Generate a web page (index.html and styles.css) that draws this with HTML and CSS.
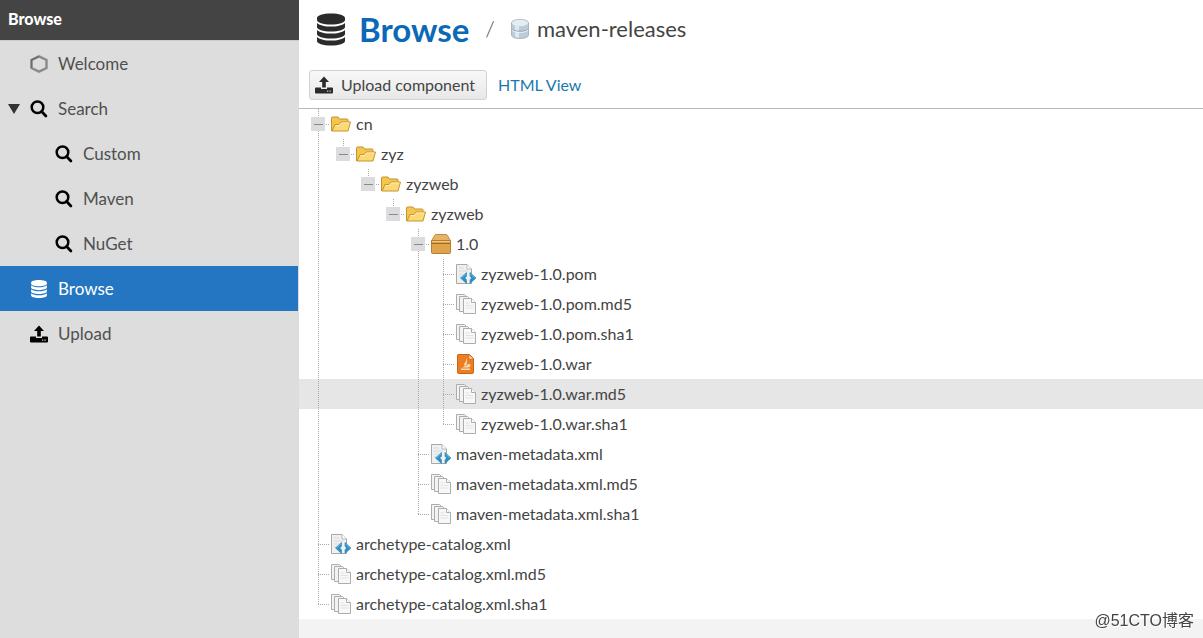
FILE: index.html
```html
<!DOCTYPE html>
<html lang="en">
<head>
	<meta charset="UTF-8">
	<title>Browse</title>
	<link rel="stylesheet" href="styles.css">
</head>
<body>
	<svg class="defs" aria-hidden="true">
		<symbol id="hexagon" viewBox="0 0 18 18">
			<path d="M9 1.300 16.500 5v8L9 16.700 1.500 13V5z" fill="none" stroke="#8a8a8a" stroke-width="2.4"/>
			<path d="M9 1.300 1.500 5v8" fill="none" stroke="#6c6c6c" stroke-width="1.400"/>
		</symbol>
		<symbol id="search" viewBox="0 0 18 18">
			<circle cx="7.5" cy="7.3" r="5.8" fill="none" stroke="currentColor" stroke-width="2.5"/>
			<path d="m11.6 11.6 4.3 4.3" stroke="currentColor" stroke-width="2.8" stroke-linecap="round"/>
		</symbol>
		<symbol id="database" viewBox="0 0 28 32">
			<path fill="currentColor" d="M0 4.500C0 2 6 0 14 0s14 2 14 4.500v2C28 9 22 11 14 11S0 9 0 6.500zM0 9.500c3 2.600 8.500 3.600 14 3.600s11-1 14-3.600v4C28 16 22 18 14 18S0 16 0 13.500zM0 16.500c3 2.600 8.500 3.600 14 3.600s11-1 14-3.600v4c0 2.500-6 4.500-14 4.500S0 23 0 20.500zM0 23.500c3 2.600 8.500 3.600 14 3.600s11-1 14-3.600v4c0 2.500-6 4.500-14 4.500S0 30 0 27.500z"/>
		</symbol>
		<symbol id="upload" viewBox="0 0 18 17">
			<path fill="currentColor" d="M9 0l5 5.500h-3.200V11H7.200V5.500H4zM1 11h5v1.500h6V11h5q1 0 1 1v4q0 1-1 1H1q-1 0-1-1v-4q0-1 1-1z"/>
			<path fill="#ccc" d="M12 14h1.300v1.200H12zM14.500 14h1.300v1.200h-1.300z"/>
		</symbol>
		<symbol id="repo" viewBox="0 0 18 20">
			<path d="M.500 4C.500 2 4 .500 9 .500S17.500 2 17.500 4v12c0 2-3.500 3.500-8.500 3.500S.500 18 .500 16z" fill="#bccbd8" stroke="#a9b7c3"/>
			<path d="M4 6v12l4 .8V7z" fill="#dfe8ef"/>
			<ellipse cx="9" cy="4" rx="8" ry="3.200" fill="#e4edf3"/>
			<path d="M.500 10c2 3 15 3 17 0" fill="none" stroke="#8fa2b3"/>
			<path d="M1 11.200c3 3 13 3 16 0" fill="none" stroke="#edf3f7"/>
		</symbol>
		<symbol id="folder" viewBox="0 0 20 16">
			<path d="M.500 15V2q0-1 1-1H7l1.500 2H16q1 0 1 1v3" fill="#f5c64d" stroke="#c8922f"/>
			<path d="M1 15 4 8.500h4L10 6h9.500L17 15z" fill="#fbd975" stroke="#c8922f" stroke-linejoin="round"/>
			<path d="M4.700 9.500h3.800l2-2.500h7.700" fill="none" stroke="#ffefb5"/>
		</symbol>
		<symbol id="package" viewBox="0 0 20 20">
			<path d="M.500 7 3.500 1.500Q4 .500 5 .500h10q1 0 1.500 1L19.500 7z" fill="#e5b365" stroke="#c38b3c"/>
			<path d="M.500 6.500h19v12q0 1-1 1h-17q-1 0-1-1z" fill="#dda44d" stroke="#b97d2e"/>
			<path d="M1 9.500h18" stroke="#9c6926"/>
			<path d="M1 7.500h18" stroke="#efc57d"/>
		</symbol>
		<symbol id="code" viewBox="0 0 20 20">
			<path d="M.500.500H11L15.500 5v14.500H.500z" fill="#eef0f1" stroke="#a8a8a8"/>
			<path d="M11 .500V5h4.500" fill="#fff" stroke="#b8b8b8"/>
			<path d="M3 4h5M3 7h9M3 10h4M3 13h2" stroke="#d7d9db"/>
			<path d="m10.500 8.500v3.700L8.800 14l1.700 1.800v3.700L4.500 14zM14 8.500v3.700l1.700 1.800-1.700 1.800v3.700l6-5.500z" fill="#2b91c5" stroke="#2b85b5" stroke-width=".6" stroke-linejoin="round"/>
			<path d="m9.800 10-4 4M14.700 10l4 4" stroke="#74c0e2" stroke-width=".8"/>
		</symbol>
		<symbol id="files" viewBox="0 0 20 20">
			<g fill="#f3f3f3" stroke="#adadad">
				<path d="M.500.500h8l3 3v12H.500z"/>
				<path d="M3.500 2.500h8l3 3v12h-11z"/>
				<path d="M7.500 4.500h8l4 4v11h-12z" fill="#f8f8f8"/>
				<path d="M15.500 4.500v4h4" fill="#fff"/>
			</g>
			<path d="M9.500 9h4M9.500 11.500h8M9.500 14h8" stroke="#e2e2e2"/>
		</symbol>
		<symbol id="archive" viewBox="0 0 20 20">
			<path d="M2 .500h11.500l4 4V18q0 1.500-1.500 1.500H3Q1.500 19.500 1.500 18V1z" fill="#ec7d22" stroke="#ca6415"/>
			<path d="M13 1v4h4" fill="#ffe2c4" stroke="#d66c18" stroke-width=".6"/>
			<path d="M5 16h9v-1.500H5zM6 13.500h6.500q2 0 2-2T12.500 10M9 12c-3-3 3-4 1-8 3 3-.500 5 1 8z" fill="#ffd9ae"/>
		</symbol>
	</svg>

	<nav class="sidebar">
		<h2>Browse</h2>
		<ul class="menu">
			<li><a href="#"><svg class="icon hexagon"><use href="#hexagon"/></svg>Welcome</a></li>
			<li><a href="#" class="parent"><i class="arrow"></i><svg class="icon"><use href="#search"/></svg>Search</a></li>
			<li><a href="#" class="child"><svg class="icon"><use href="#search"/></svg>Custom</a></li>
			<li><a href="#" class="child"><svg class="icon"><use href="#search"/></svg>Maven</a></li>
			<li><a href="#" class="child"><svg class="icon"><use href="#search"/></svg>NuGet</a></li>
			<li><a href="#" class="active"><svg class="icon"><use href="#database"/></svg>Browse</a></li>
			<li><a href="#"><svg class="icon"><use href="#upload"/></svg>Upload</a></li>
		</ul>
	</nav>

	<main class="main">
		<header class="header">
			<div class="crumbs">
				<svg class="big-icon"><use href="#database"/></svg>
				<h1><a href="#">Browse</a></h1>
				<span class="slash">/</span>
				<svg class="repo-icon"><use href="#repo"/></svg>
				<span class="repo-name">maven-releases</span>
			</div>
			<div class="toolbar">
				<button type="button" class="upload"><svg class="icon"><use href="#upload"/></svg>Upload component</button>
				<a href="#">HTML View</a>
			</div>
		</header>

		<ul class="tree">
			<li><i class="cell line elbow"><button type="button" class="toggle" aria-label="Collapse"></button></i><svg class="node folder"><use href="#folder"/></svg>cn</li>
			<li><i class="cell line"></i><i class="cell elbow last"><button type="button" class="toggle" aria-label="Collapse"></button></i><svg class="node folder"><use href="#folder"/></svg>zyz</li>
			<li><i class="cell line"></i><i class="cell"></i><i class="cell elbow last"><button type="button" class="toggle" aria-label="Collapse"></button></i><svg class="node folder"><use href="#folder"/></svg>zyzweb</li>
			<li><i class="cell line"></i><i class="cell"></i><i class="cell"></i><i class="cell elbow last"><button type="button" class="toggle" aria-label="Collapse"></button></i><svg class="node folder"><use href="#folder"/></svg>zyzweb</li>
			<li><i class="cell line"></i><i class="cell"></i><i class="cell"></i><i class="cell"></i><i class="cell line elbow"><button type="button" class="toggle" aria-label="Collapse"></button></i><svg class="node"><use href="#package"/></svg>1.0</li>
			<li><i class="cell line"></i><i class="cell"></i><i class="cell"></i><i class="cell"></i><i class="cell line"></i><i class="cell line elbow"></i><svg class="node"><use href="#code"/></svg>zyzweb-1.0.pom</li>
			<li><i class="cell line"></i><i class="cell"></i><i class="cell"></i><i class="cell"></i><i class="cell line"></i><i class="cell line elbow"></i><svg class="node"><use href="#files"/></svg>zyzweb-1.0.pom.md5</li>
			<li><i class="cell line"></i><i class="cell"></i><i class="cell"></i><i class="cell"></i><i class="cell line"></i><i class="cell line elbow"></i><svg class="node"><use href="#files"/></svg>zyzweb-1.0.pom.sha1</li>
			<li><i class="cell line"></i><i class="cell"></i><i class="cell"></i><i class="cell"></i><i class="cell line"></i><i class="cell line elbow"></i><svg class="node"><use href="#archive"/></svg>zyzweb-1.0.war</li>
			<li class="hover"><i class="cell line"></i><i class="cell"></i><i class="cell"></i><i class="cell"></i><i class="cell line"></i><i class="cell line elbow"></i><svg class="node"><use href="#files"/></svg>zyzweb-1.0.war.md5</li>
			<li><i class="cell line"></i><i class="cell"></i><i class="cell"></i><i class="cell"></i><i class="cell line"></i><i class="cell elbow last"></i><svg class="node"><use href="#files"/></svg>zyzweb-1.0.war.sha1</li>
			<li><i class="cell line"></i><i class="cell"></i><i class="cell"></i><i class="cell"></i><i class="cell line elbow"></i><svg class="node"><use href="#code"/></svg>maven-metadata.xml</li>
			<li><i class="cell line"></i><i class="cell"></i><i class="cell"></i><i class="cell"></i><i class="cell line elbow"></i><svg class="node"><use href="#files"/></svg>maven-metadata.xml.md5</li>
			<li><i class="cell line"></i><i class="cell"></i><i class="cell"></i><i class="cell"></i><i class="cell elbow last"></i><svg class="node"><use href="#files"/></svg>maven-metadata.xml.sha1</li>
			<li><i class="cell line elbow"></i><svg class="node"><use href="#code"/></svg>archetype-catalog.xml</li>
			<li><i class="cell line elbow"></i><svg class="node"><use href="#files"/></svg>archetype-catalog.xml.md5</li>
			<li><i class="cell elbow last"></i><svg class="node"><use href="#files"/></svg>archetype-catalog.xml.sha1</li>
		</ul>
	</main>
	<div class="watermark">@51CTO博客</div>
</body>
</html>
```
FILE: styles.css
```css
*{
	margin: 0;
	padding: 0;
	box-sizing: border-box;
}
body{
	display: flex;
	min-height: 100vh;
	background: #f3f3f3;
	color: #444;
	font: 16px/30px Lato, "Noto Sans CJK SC", sans-serif;
}
ul{
	list-style: none;
}
a{
	color: #1c78b0;
	text-decoration: none;
}
svg{
	flex: none;
}
.defs{
	position: absolute;
	width: 0;
	height: 0;
}

/* sidebar */
.sidebar{
	flex: none;
	width: 299px;
	background: #ddd;
}
.sidebar h2{
	height: 41px;
	padding-left: 8px;
	border-bottom: 1px solid #ccc;
	background: #444;
	color: #fff;
	font-size: 16px;
	font-weight: 900;
	line-height: 38px;
}
.menu{
	margin-right: 1px;
}
.menu a{
	display: flex;
	align-items: center;
	gap: 10px;
	height: 45px;
	padding-left: 30px;
	color: #505050;
	font-size: 17px;
}
.menu .parent{
	padding-left: 8px;
}
.menu .child{
	padding-left: 55px;
}
.menu .active{
	background: #2476c3;
	color: #fff;
}
.icon{
	width: 18px;
	height: 18px;
	color: #000;
}
.menu .hexagon{
	height: 20px;
}
.active .icon{
	color: #fff;
}
.arrow{
	border: 6px solid transparent;
	border-top: 10px solid #333;
	border-bottom: 0;
}

/* header */
.main{
	flex: 1;
	min-width: 0;
}
.header{
	height: 109px;
	padding-left: 10px;
	border-bottom: 1px solid #bbb;
	background: #fff;
}
.crumbs{
	display: flex;
	align-items: center;
	height: 58px;
	padding-left: 8px;
}
.big-icon{
	width: 28px;
	height: 33px;
}
.crumbs h1{
	margin: 0 16px 0 14px;
	font-size: 33px;
}
.crumbs h1 a{
	color: #0b69b7;
}
.slash{
	font-size: 22px;
	font-weight: 300;
}
.repo-icon{
	width: 18px;
	height: 20px;
	margin: 0 8px 0 16px;
}
.repo-name{
	font-size: 22px;
}
.toolbar{
	display: flex;
	align-items: center;
	gap: 11px;
	padding-top: 12px;
}
.upload{
	display: flex;
	align-items: center;
	gap: 8px;
	height: 30px;
	padding: 0 11px 0 5px;
	border: 1px solid #d2d2d2;
	border-radius: 3px;
	background: linear-gradient(#f8f8f8, #e8e8e8);
	color: #444;
	font: inherit;
}
.upload .icon, .big-icon{
	color: #2b2b2b;
}

/* tree */
.tree{
	background: #fff;
}
.tree li{
	display: flex;
	align-items: center;
	height: 30px;
	padding-left: 7px;
	line-height: 28px;
}
.tree .hover{
	background: #e6e6e6;
}
.cell{
	display: flex;
	align-items: center;
	flex: none;
	width: 25px;
	height: 30px;
	padding-left: 5px;
	background-repeat: no-repeat;
}
.line{
	background-image: repeating-linear-gradient(#aaa 0 1px, transparent 1px 2px);
	background-position: 12px 0;
	background-size: 1px 30px;
}
.elbow{
	background-image: repeating-linear-gradient(#aaa 0 1px, transparent 1px 2px), repeating-linear-gradient(90deg, #aaa 0 1px, transparent 1px 2px);
	background-position: 12px 0, 12px 15px;
	background-size: 1px 30px, 12px 1px;
}
.last{
	background-size: 1px 16px, 12px 1px;
}
.toggle{
	width: 14px;
	height: 14px;
	border: 0;
	background: linear-gradient(#888, #888) center / 9px 1px no-repeat #dcdcdf;
}
.node{
	width: 20px;
	height: 20px;
	margin-right: 5px;
}
.folder{
	height: 16px;
}

.watermark{
	position: fixed;
	right: 9px;
	bottom: 6px;
	color: #444;
	font: 16px/22px "Liberation Sans", "Noto Sans CJK SC", sans-serif;
	text-shadow: 1px 1px #fff;
}
```
